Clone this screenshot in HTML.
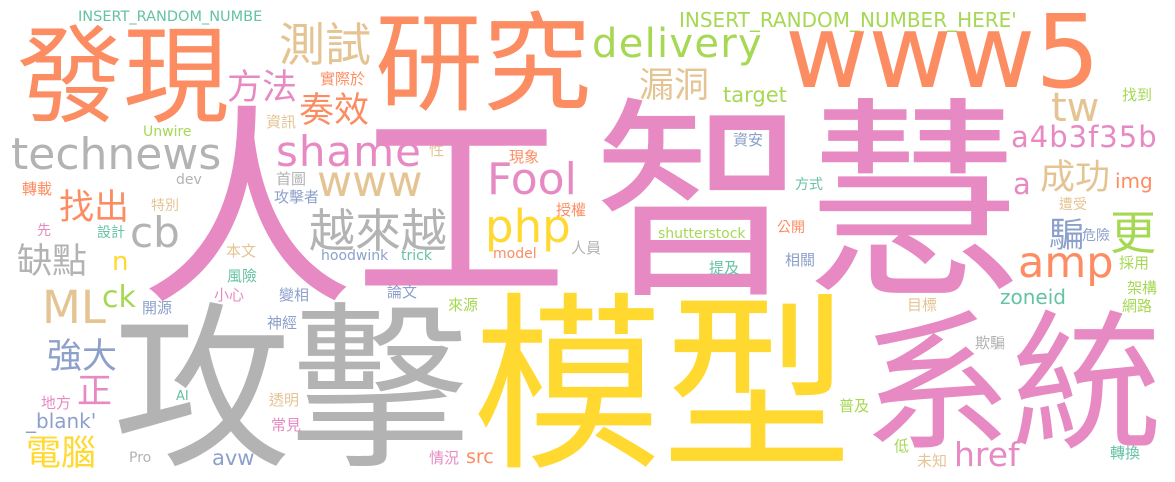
<!DOCTYPE html>
<html><head><meta charset="utf-8">
<style>
html,body{margin:0;padding:0;background:#fff;}
#c{position:relative;width:1175px;height:482px;overflow:hidden;background:#fff;}
#c span{position:absolute;line-height:1;white-space:nowrap;}
.j{font-family:"Liberation Sans","Noto Sans CJK TC",sans-serif;transform:translateY(0.06em);}
.l{font-family:"DejaVu Sans","Liberation Sans",sans-serif;}
.te{color:#66c2a5}.or{color:#fc8d62}.bl{color:#8da0cb}.pk{color:#e78ac3}
.gr{color:#a6d854}.ye{color:#ffd92f}.ta{color:#e5c494}.gy{color:#b3b3b3}
</style></head><body><div id="c">
<span class="j or" style="left:17px;top:18px;font-size:106px">發現</span>
<span class="j or" style="left:375px;top:4px;font-size:108px">研究</span>
<span class="j ta" style="left:279px;top:19px;font-size:46px">測試</span>
<span class="j pk" style="left:227px;top:68px;font-size:35px">方法</span>
<span class="j or" style="left:320px;top:71px;font-size:15px">實際於</span>
<span class="j or" style="left:299px;top:91px;font-size:35px">奏效</span>
<span class="j ta" style="left:266px;top:114px;font-size:15px">資訊</span>
<span class="j or" style="left:22px;top:181px;font-size:15px">轉載</span>
<span class="j or" style="left:59px;top:188px;font-size:35px">找出</span>
<span class="j gy" style="left:276px;top:171px;font-size:15px">首圖</span>
<span class="j bl" style="left:274px;top:189px;font-size:15px">攻擊者</span>
<span class="j ta" style="left:151px;top:197px;font-size:14px">特別</span>
<span class="j pk" style="left:37px;top:222px;font-size:14px">先</span>
<span class="j te" style="left:97px;top:224px;font-size:14px">設計</span>
<span class="j gy" style="left:309px;top:205px;font-size:46px">越來越</span>
<span class="j ta" style="left:639px;top:66px;font-size:35px">漏洞</span>
<span class="j ta" style="left:429px;top:142px;font-size:15px">性</span>
<span class="j or" style="left:509px;top:149px;font-size:15px">現象</span>
<span class="j or" style="left:556px;top:202px;font-size:15px">授權</span>
<span class="j bl" style="left:733px;top:132px;font-size:15px">資安</span>
<span class="j or" style="left:777px;top:219px;font-size:14px">公開</span>
<span class="j gr" style="left:1122px;top:87px;font-size:15px">找到</span>
<span class="j ta" style="left:1040px;top:158px;font-size:35px">成功</span>
<span class="j te" style="left:795px;top:176px;font-size:14px">方式</span>
<span class="j ta" style="left:1059px;top:196px;font-size:14px">遭受</span>
<span class="j bl" style="left:1049px;top:216px;font-size:35px">騙</span>
<span class="j bl" style="left:1082px;top:227px;font-size:14px">危險</span>
<span class="j gr" style="left:1110px;top:207px;font-size:46px">更</span>
<span class="j pk" style="left:593px;top:85px;font-size:214px">智慧</span>
<span class="j pk" style="left:140px;top:92px;font-size:214px">人工</span>
<span class="j gy" style="left:113px;top:291px;font-size:178px">攻擊</span>
<span class="j ye" style="left:472px;top:281px;font-size:190px">模型</span>
<span class="j pk" style="left:862px;top:300px;font-size:150px">系統</span>
<span class="j gy" style="left:17px;top:242px;font-size:35px">缺點</span>
<span class="j ta" style="left:226px;top:243px;font-size:15px">本文</span>
<span class="j te" style="left:227px;top:268px;font-size:15px">風險</span>
<span class="j pk" style="left:214px;top:287px;font-size:15px">小心</span>
<span class="j bl" style="left:279px;top:287px;font-size:15px">變相</span>
<span class="j bl" style="left:142px;top:300px;font-size:15px">開源</span>
<span class="j bl" style="left:267px;top:315px;font-size:15px">神經</span>
<span class="j bl" style="left:387px;top:284px;font-size:15px">論文</span>
<span class="j gr" style="left:448px;top:297px;font-size:15px">來源</span>
<span class="j bl" style="left:47px;top:337px;font-size:35px">強大</span>
<span class="j pk" style="left:77px;top:372px;font-size:35px">正</span>
<span class="j pk" style="left:41px;top:395px;font-size:15px">地方</span>
<span class="j ta" style="left:269px;top:392px;font-size:15px">透明</span>
<span class="j pk" style="left:271px;top:417px;font-size:15px">常見</span>
<span class="j ye" style="left:26px;top:434px;font-size:35px">電腦</span>
<span class="j pk" style="left:429px;top:450px;font-size:15px">情況</span>
<span class="j gy" style="left:571px;top:240px;font-size:15px">人員</span>
<span class="j te" style="left:709px;top:260px;font-size:15px">提及</span>
<span class="j bl" style="left:785px;top:252px;font-size:15px">相關</span>
<span class="j gr" style="left:1119px;top:255px;font-size:15px">採用</span>
<span class="j gr" style="left:1127px;top:280px;font-size:15px">架構</span>
<span class="j gr" style="left:1122px;top:298px;font-size:15px">網路</span>
<span class="j ta" style="left:907px;top:297px;font-size:15px">目標</span>
<span class="j gy" style="left:975px;top:335px;font-size:15px">欺騙</span>
<span class="j gr" style="left:839px;top:398px;font-size:15px">普及</span>
<span class="j gr" style="left:894px;top:438px;font-size:15px">低</span>
<span class="j ta" style="left:917px;top:453px;font-size:15px">未知</span>
<span class="j te" style="left:1110px;top:445px;font-size:15px">轉換</span>

<span class="l te" style="left:78px;top:10px;font-size:14.5px">INSERT_RANDOM_NUMBE</span>
<span class="l gr" style="left:679px;top:10px;font-size:20px">INSERT_RANDOM_NUMBER_HERE'</span>
<span class="l gr" style="left:592px;top:24px;font-size:40px;letter-spacing:1.3px">delivery</span>
<span class="l or" style="left:785px;top:2px;font-size:102px">www5</span>
<span class="l gy" style="left:11px;top:133px;font-size:44px">technews</span>
<span class="l pk" style="left:276px;top:131px;font-size:42px;letter-spacing:1px">shame</span>
<span class="l ta" style="left:317px;top:161px;font-size:43px">www</span>
<span class="l pk" style="left:487px;top:158px;font-size:44px">Fool</span>
<span class="l ye" style="left:485px;top:204px;font-size:45px">php</span>
<span class="l gy" style="left:130px;top:212px;font-size:42px">cb</span>
<span class="l ye" style="left:112px;top:249px;font-size:26px">n</span>
<span class="l ta" style="left:42px;top:285px;font-size:45px">ML</span>
<span class="l gr" style="left:102px;top:283px;font-size:30px">ck</span>
<span class="l bl" style="left:321px;top:249px;font-size:14px">hoodwink</span>
<span class="l te" style="left:401px;top:249px;font-size:14px">trick</span>
<span class="l or" style="left:493px;top:247px;font-size:14px">model</span>
<span class="l te" style="left:176px;top:390px;font-size:13px">AI</span>
<span class="l bl" style="left:26px;top:411px;font-size:20px">_blank'</span>
<span class="l gy" style="left:129px;top:451px;font-size:14px">Pro</span>
<span class="l bl" style="left:212px;top:448px;font-size:21px">avw</span>
<span class="l or" style="left:466px;top:448px;font-size:19px">src</span>
<span class="l ta" style="left:1051px;top:88px;font-size:40px">tw</span>
<span class="l pk" style="left:1011px;top:123px;font-size:29px;letter-spacing:1px">a4b3f35b</span>
<span class="l pk" style="left:1013px;top:170px;font-size:29px">a</span>
<span class="l or" style="left:1115px;top:171px;font-size:20px">img</span>
<span class="l gr" style="left:723px;top:85px;font-size:21px">target</span>
<span class="l gr" style="left:658px;top:227px;font-size:14px">shutterstock</span>
<span class="l or" style="left:1018px;top:242px;font-size:43px">amp</span>
<span class="l te" style="left:1000px;top:287px;font-size:20px">zoneid</span>
<span class="l pk" style="left:954px;top:438px;font-size:33px">href</span>
<span class="l gy" style="left:176px;top:173px;font-size:14px">dev</span>
<span class="l gr" style="left:143px;top:125px;font-size:14px">Unwire</span>
</div></body></html>
